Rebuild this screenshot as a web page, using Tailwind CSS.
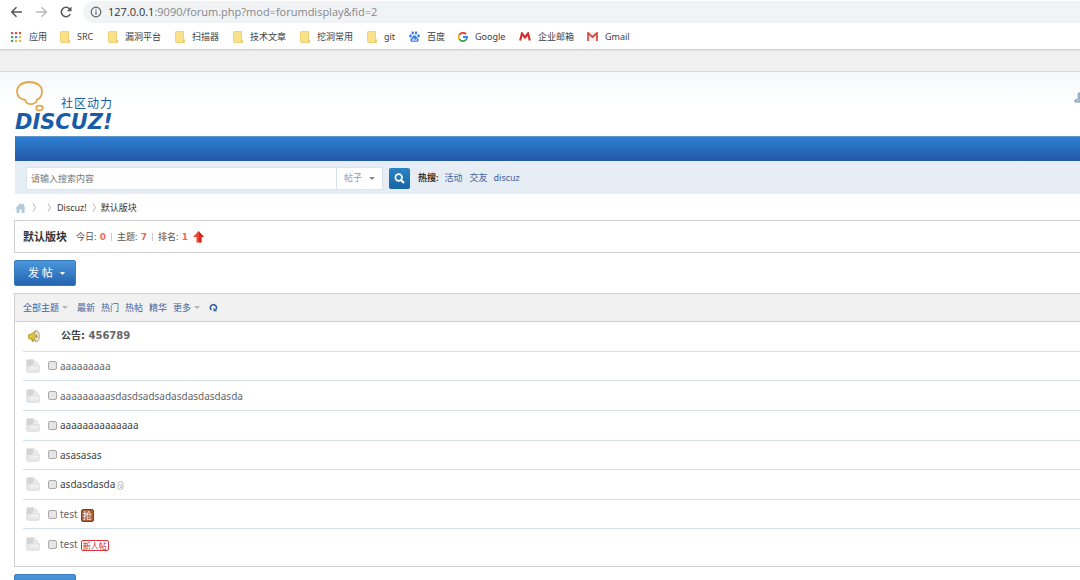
<!DOCTYPE html>
<html lang="zh-CN">
<head>
<meta charset="utf-8">
<title>默认版块 - Discuz!</title>
<script src="https://cdn.jsdelivr.net/npm/@tailwindcss/browser@4"></script>
</head>
<body class="h-screen overflow-hidden bg-white font-['Noto_Sans','Noto_Sans_CJK_SC',sans-serif] text-[9px] leading-3 text-[#555]">
<svg class="hidden">
  <symbol id="folder" viewBox="0 0 10 12"><path d="M.5 1.5Q.5.5 1.500.5H8.500V8l1 1v2.500H1.500Q.5 11.500.5 10.500Z" fill="#fbe08a" stroke="#ecca68" stroke-width=".8"/><path d="M8 8.500h1.500v3H8z" fill="#efc65b"/></symbol>
  <symbol id="page" viewBox="0 0 14 14"><path d="M1.500.7h6.500v5.800h5.300V12q0 1.300-1.300 1.300H2Q.7 13.300.7 12V2Q.7.7 1.500.7z" fill="#e6e6e6" stroke="#d9d9d9" stroke-width=".8"/><path d="M9 1l4.300 4.500H9z" fill="#e2e2e2"/><path d="M1 1h6.500v3.500L5 7H1z" fill="#d4d4d4"/><path d="M5.500 7.500h7v3h-9z" fill="#f0f0f0"/></symbol>
  <symbol id="sep" viewBox="0 0 5 9"><path d="M1 .5l2.500 4L1 8.500" fill="none" stroke="#b9b9b9"/></symbol>
</svg>

<header>
  <div class="flex h-6 items-center pl-[10px]">
    <button aria-label="后退"><svg class="h-3 w-[13px]" viewBox="0 0 13 12" fill="none" stroke="#55585c" stroke-width="1.500"><path d="M12 6H1.800M6.500 1.200L1.700 6l4.800 4.800"/></svg></button>
    <button aria-label="前进" class="ml-3"><svg class="h-3 w-[13px]" viewBox="0 0 13 12" fill="none" stroke="#b9bbbd" stroke-width="1.500"><path d="M1 6h10.200M6.500 1.200L11.300 6l-4.800 4.800"/></svg></button>
    <button aria-label="重新加载" class="ml-3"><svg class="size-3" viewBox="0 0 12 12"><path d="M10.300 8A4.700 4.700 0 1 1 9.600 2.900" fill="none" stroke="#55585c" stroke-width="1.500"/><path d="M11.500.5v4.800H6.800z" fill="#55585c"/></svg></button>
    <div class="ml-[11px] flex h-[22px] flex-1 items-center rounded-l-full bg-[#f1f3f4] pl-[7px]">
      <svg class="size-3" viewBox="0 0 12 12" fill="none" stroke="#5f6368"><circle cx="6" cy="6" r="4.800" stroke-width="1.200"/><path d="M6 5.200v3.500M6 3v1.300" stroke-width="1.200"/></svg>
      <div class="ml-[6px] font-['Open_Sans',sans-serif] text-[11px] leading-4 text-[#85888c]"><span class="text-[#303236]">127.0.0.1</span>:9090/forum.php?mod=forumdisplay&amp;fid=2</div>
    </div>
  </div>
  <nav class="flex h-[26px] items-center border-b border-[#d2d2d2] pl-[11px] whitespace-nowrap text-[#3c4043]">
    <a href="#" class="flex w-[49px] items-center gap-2"><svg class="size-[10px]" viewBox="0 0 10 10"><g fill="#e0554a"><path d="M0 0h2.200v2.200H0zM4 0h2.200v2.200H4zM8 0h2.200v2.200H8z"/></g><path fill="#4b9b62" d="M0 4h2.200v2.200H0zM0 8h2.200v2.200H0z"/><path fill="#4a83d6" d="M4 4h2.200v2.200H4z"/><path fill="#e9b53d" d="M8 4h2.200v2.200H8zM4 8h2.200v2.200H4zM8 8h2.200v2.200H8z"/></svg>应用</a>
    <a href="#" class="flex w-12 items-center gap-[7px]"><svg class="h-3 w-[10px]"><use href="#folder"/></svg>SRC</a>
    <a href="#" class="flex w-[67px] items-center gap-[7px]"><svg class="h-3 w-[10px]"><use href="#folder"/></svg>漏洞平台</a>
    <a href="#" class="flex w-[58px] items-center gap-[7px]"><svg class="h-3 w-[10px]"><use href="#folder"/></svg>扫描器</a>
    <a href="#" class="flex w-[67px] items-center gap-[7px]"><svg class="h-3 w-[10px]"><use href="#folder"/></svg>技术文章</a>
    <a href="#" class="flex w-[67px] items-center gap-[7px]"><svg class="h-3 w-[10px]"><use href="#folder"/></svg>挖洞常用</a>
    <a href="#" class="flex w-[42px] items-center gap-[7px]"><svg class="h-3 w-[10px]"><use href="#folder"/></svg>git</a>
    <a href="#" class="flex w-[49px] items-center gap-[7px]"><svg class="size-[11px]" viewBox="0 0 11 11" fill="#3b7de8"><ellipse cx="1.500" cy="4.800" rx="1.300" ry="1.600"/><ellipse cx="3.800" cy="1.900" rx="1.200" ry="1.700"/><ellipse cx="7" cy="1.900" rx="1.200" ry="1.700"/><ellipse cx="9.500" cy="4.800" rx="1.300" ry="1.600"/><path d="M5.500 4.300C7 4.300 7.300 6 8.800 7.200c1.800 1.700.6 3.900-1.300 3.600-1.600-.2-2.400-.2-4 0-2 .3-3-2-1.300-3.600C3.700 6 4 4.300 5.500 4.300z"/><path d="M4.800 7v2.500H3.600V8.200h1M6 7.800v1.700h1.500V7.800" fill="none" stroke="#fff" stroke-width=".7"/></svg>百度</a>
    <a href="#" class="flex w-[61px] items-center gap-[7px]"><svg class="size-[10px]" viewBox="0 0 9 9" fill="none" stroke-width="1.700"><path d="M1.100 2.800A3.700 3.700 0 0 1 7.200 2" stroke="#e64335"/><path d="M1.100 2.800a3.700 3.700 0 0 0 0 3.400" stroke="#f6b704"/><path d="M1.100 6.200A3.700 3.700 0 0 0 7 7.100" stroke="#34a553"/><path d="M7 7.100a3.700 3.700 0 0 0 1.100-2.600H4.500" stroke="#4280ef"/></svg>Google</a>
    <a href="#" class="flex w-[68px] items-center gap-[7px]"><svg class="h-[9px] w-3" viewBox="0 0 12 9"><path d="M1.200 8.500L3 1.500l3 4 3-4 1.800 7" fill="none" stroke="#d32f2f" stroke-width="2.200"/></svg>企业邮箱</a>
    <a href="#" class="flex items-center gap-[7px]"><svg class="h-[9px] w-[11px]" viewBox="0 0 11 9"><path d="M1 0h9v9H1z" fill="#eee"/><path d="M1 9V1l4.500 4L10 1v8" fill="none" stroke="#d5493f" stroke-width="1.700"/></svg>Gmail</a>
  </nav>
</header>

<div class="h-[22px] border-t border-b border-t-[#e4e4e4] border-b-[#d9d9d9] bg-[#f0f0f0]"></div>

<main class="bg-linear-to-b from-[#f5f9fc] to-white to-[36px] pl-[15px]">
  <div class="flex h-16 items-start justify-between">
    <a href="#" class="relative block h-[62px] w-[104px] text-[#1a5ba8]" aria-label="Discuz! 社区动力">
      <svg class="absolute top-2 left-0 h-8 w-8" viewBox="0 0 32 32" fill="none" stroke="#e3a94f" stroke-width="1.800"><path d="M10.500 20C4 19 2 15 2 11.500 2 6 7 2 14.500 2S27 6 27 11.500c0 4-2 7-5 8.200 0 2.500-3 4.500-5.500 4.500-3.500 0-6-1.500-6-4.200z"/><ellipse cx="24.500" cy="28" rx="3.300" ry="2.400"/></svg>
      <span class="absolute top-[26px] left-[46px] text-[12px] leading-3 tracking-[1px] whitespace-nowrap">社区动力</span>
      <span class="absolute top-[41px] left-0 font-['DejaVu_Sans',sans-serif] text-[21px] leading-[18px] font-bold italic">DISCUZ!</span>
    </a>
    <svg class="mt-5 h-[11px] w-[6px]" viewBox="0 0 6 11"><path d="M6 1H4.500L4 3.500 4.500 6 3 7.500 1 8v2h5z" fill="#b5cadb" stroke="#7f9db7"/></svg>
  </div>
  <nav class="h-[25px] border-t border-[#5c95cc] bg-linear-to-b from-[#2d7fd4] to-[#2358a7]"></nav>
  <form class="flex h-[33px] items-center bg-[#e6edf5] pt-px pl-[11px]">
    <input aria-label="搜索" placeholder="请输入搜索内容" class="h-[23px] w-[311px] border border-[#d8e4ee] bg-white px-1 text-[9px] placeholder:text-[#777]">
    <button type="button" class="flex h-[23px] w-[46px] items-center gap-[7px] border-y border-r border-[#d8e4ee] bg-white pl-[7px] text-[#999]">帖子<svg class="h-[3px] w-[6px]" viewBox="0 0 6 3"><path d="M0 0h6L3 3z" fill="#888"/></svg></button>
    <button type="button" aria-label="搜索" class="ml-[6px] flex size-[21px] items-center justify-center rounded-xs bg-linear-to-b from-[#2d83c2] to-[#1766a6]"><svg class="size-[11px]" viewBox="0 0 11 11" fill="none" stroke="#fff"><circle cx="4.700" cy="4.500" r="3.300" stroke-width="1.700"/><path d="M7 7l3 3" stroke-width="2"/></svg></button>
    <strong class="ml-2 text-[#333]">热搜:</strong>
    <a href="#" class="ml-[6px] text-[#44639a]">活动</a><a href="#" class="ml-[7px] text-[#44639a]">交友</a><a href="#" class="ml-[6px] text-[#44639a]">discuz</a>
  </form>
  <nav class="flex h-[26px] items-center pt-px text-[#333]">
    <a href="#" aria-label="首页"><svg class="h-[10px] w-[11px]" viewBox="0 0 11 10"><path d="M0 5.500L5.500 0l2 2V.8h1.700v2.900L11 5.500H9.500V10h-3V6.500h-2V10h-3V5.500z" fill="#b2cbdb"/></svg></a>
    <svg class="ml-[6px] h-[9px] w-[5px]"><use href="#sep"/></svg>
    <svg class="ml-[10px] h-[9px] w-[5px]"><use href="#sep"/></svg>
    <a href="#" class="ml-[5px]">Discuz!</a>
    <svg class="ml-[5px] h-[9px] w-[5px]"><use href="#sep"/></svg>
    <a href="#" class="ml-[4px]">默认版块</a>
  </nav>

  <section class="-ml-px flex h-[33px] items-center border border-r-0 border-[#d0d0d0] pl-2">
    <h1 class="text-[11px] leading-4 font-bold text-[#333]">默认版块</h1>
    <span class="ml-[9px]">今日: <b class="ml-px font-['DejaVu_Sans',sans-serif] text-[#e86a5c]">0</b></span>
    <i class="mx-[5px] h-2 w-px bg-[#ccc]"></i>
    <span>主题: <b class="ml-px font-['DejaVu_Sans',sans-serif] text-[#e86a5c]">7</b></span>
    <i class="mx-[5px] h-2 w-px bg-[#ccc]"></i>
    <span>排名: <b class="ml-px font-['DejaVu_Sans',sans-serif] text-[#e86a5c]">1</b></span>
    <svg class="ml-[5px] h-3 w-[11px]" viewBox="0 0 11 12"><path d="M5.500 0L11 6H8.500v5.500h-5V6H0z" fill="#f04a36"/><path d="M5.500 0L11 6H8.500v5.500H6z" fill="#d92a20"/></svg>
  </section>

  <button class="mt-[7px] -ml-px flex h-[26px] w-[62px] items-center rounded-xs border border-[#3a7cc0] bg-linear-to-b from-[#4b97da] to-[#2563b1] pl-[13px] text-[11px] leading-4 text-white">发 帖<svg class="ml-[7px] h-[3px] w-[5px]" viewBox="0 0 5 3"><path d="M0 0h5L2.500 3z" fill="#fff"/></svg></button>

  <section class="mt-[7px] -ml-px border border-r-0 border-[#d0d0d0] bg-white pb-[7px]">
    <nav class="flex h-7 items-center border-b border-[#d0d0d0] bg-[#f1f1f1] pl-2 text-[#44639a]">
      <a href="#">全部主题</a><svg class="ml-[3px] h-[3px] w-[6px]" viewBox="0 0 6 3"><path d="M0 0h6L3 3z" fill="#b5b5b5"/></svg>
      <a href="#" class="ml-[9px]">最新</a><a href="#" class="ml-[6px]">热门</a><a href="#" class="ml-[6px]">热帖</a><a href="#" class="ml-[6px]">精华</a><a href="#" class="ml-[6px]">更多</a><svg class="ml-[3px] h-[3px] w-[6px]" viewBox="0 0 6 3"><path d="M0 0h6L3 3z" fill="#b5b5b5"/></svg>
      <button aria-label="刷新" class="ml-[9px]"><svg class="size-[9px]" viewBox="0 0 9 9"><path d="M2.500 7A3 3 0 1 1 6.800 6.500" fill="none" stroke="#2b5c98" stroke-width="1.500"/><path d="M4.500 4.700v3.500H8.300z" fill="#2b5c98"/></svg></button>
    </nav>
    <ul class="ml-2 grid min-h-[237px] auto-rows-fr text-[10px] leading-4 text-[#666]">
      <li class="flex items-center border-b border-[#d3e0e9] pl-[5px] text-[#555]"><svg class="h-[13px] w-[13px]" viewBox="0 0 13 13"><path d="M0 5l3-1 5-3.500v11L3.500 9 1 9z" fill="#e3c331" stroke="#ab8d1d" stroke-width=".7"/><path d="M3 8.500l1 3.500h1.500V9.500" fill="#c29d20"/><ellipse cx="8.800" cy="6.200" rx="2.600" ry="5.500" fill="#e9e4d2" stroke="#a79671" stroke-width=".8"/><ellipse cx="8.300" cy="6.200" rx="1" ry="2" fill="#b98c29"/></svg><a href="#" class="ml-5 font-['DejaVu_Sans','Noto_Sans_CJK_SC',sans-serif] font-bold text-[#666]"><span class="text-[#444]">公告:</span> 456789</a></li>
      <li class="flex items-center border-b border-[#d3e0e9] pl-[3px]"><svg class="size-[14px]"><use href="#page"/></svg><input type="checkbox" aria-label="选择主题 1" class="ml-2 size-[9px] appearance-none rounded-xs border border-[#aaa] bg-[#e6e6e6]"><a href="#" class="ml-[3px]">aaaaaaaaa</a></li>
      <li class="flex items-center border-b border-[#d3e0e9] pl-[3px]"><svg class="size-[14px]"><use href="#page"/></svg><input type="checkbox" aria-label="选择主题 2" class="ml-2 size-[9px] appearance-none rounded-xs border border-[#aaa] bg-[#e6e6e6]"><a href="#" class="ml-[3px]">aaaaaaaaasdasdsadsadasdasdasdasda</a></li>
      <li class="flex items-center border-b border-[#d3e0e9] pl-[3px]"><svg class="size-[14px]"><use href="#page"/></svg><input type="checkbox" aria-label="选择主题 3" class="ml-2 size-[9px] appearance-none rounded-xs border border-[#aaa] bg-[#e6e6e6]"><a href="#" class="ml-[3px] text-[#444]">aaaaaaaaaaaaaa</a></li>
      <li class="flex items-center border-b border-[#d3e0e9] pl-[3px]"><svg class="size-[14px]"><use href="#page"/></svg><input type="checkbox" aria-label="选择主题 4" class="ml-2 size-[9px] appearance-none rounded-xs border border-[#aaa] bg-[#e6e6e6]"><a href="#" class="ml-[3px] text-[#444]">asasasas</a></li>
      <li class="flex items-center border-b border-[#d3e0e9] pl-[3px]"><svg class="size-[14px]"><use href="#page"/></svg><input type="checkbox" aria-label="选择主题 5" class="ml-2 size-[9px] appearance-none rounded-xs border border-[#aaa] bg-[#e6e6e6]"><a href="#" class="ml-[3px] text-[#444]">asdasdasda</a><svg class="mt-[3px] ml-[2px] h-[9px] w-[7px]" viewBox="0 0 7 9" fill="none" stroke="#aaa" stroke-width=".8"><path d="M1.200 3V2.500q.3-2 2.500-2T6 2.800v3.400q0 2.300-2.500 2.300T1 6.500V5.200Q1.200 3.500 2.700 3.500T4.300 5v1.500H3"/></svg></li>
      <li class="flex items-center border-b border-[#d3e0e9] pl-[3px]"><svg class="size-[14px]"><use href="#page"/></svg><input type="checkbox" aria-label="选择主题 6" class="ml-2 size-[9px] appearance-none rounded-xs border border-[#aaa] bg-[#e6e6e6]"><a href="#" class="ml-[3px]">test</a><span class="mt-[3px] ml-[3px] flex size-[13px] items-center justify-center rounded-xs border border-[#7c4223] bg-[#a9623a] text-[9px] leading-[10px] text-white">抢</span></li>
      <li class="flex items-center pl-[3px]"><svg class="size-[14px]"><use href="#page"/></svg><input type="checkbox" aria-label="选择主题 7" class="ml-2 size-[9px] appearance-none rounded-xs border border-[#aaa] bg-[#e6e6e6]"><a href="#" class="ml-[3px]">test</a><span class="mt-[3px] ml-[3px] flex h-[11px] w-7 items-center justify-center rounded-xs border border-[#d8323c] text-[8px] leading-[9px] whitespace-nowrap text-[#d3202c]">新人帖</span></li>
    </ul>
  </section>

  <button aria-label="发帖" class="mt-[7px] -ml-px block h-[26px] w-[62px] rounded-xs border border-[#3a7cc0] bg-linear-to-b from-[#4b97da] to-[#2563b1]"></button>
</main>
</body>
</html>
